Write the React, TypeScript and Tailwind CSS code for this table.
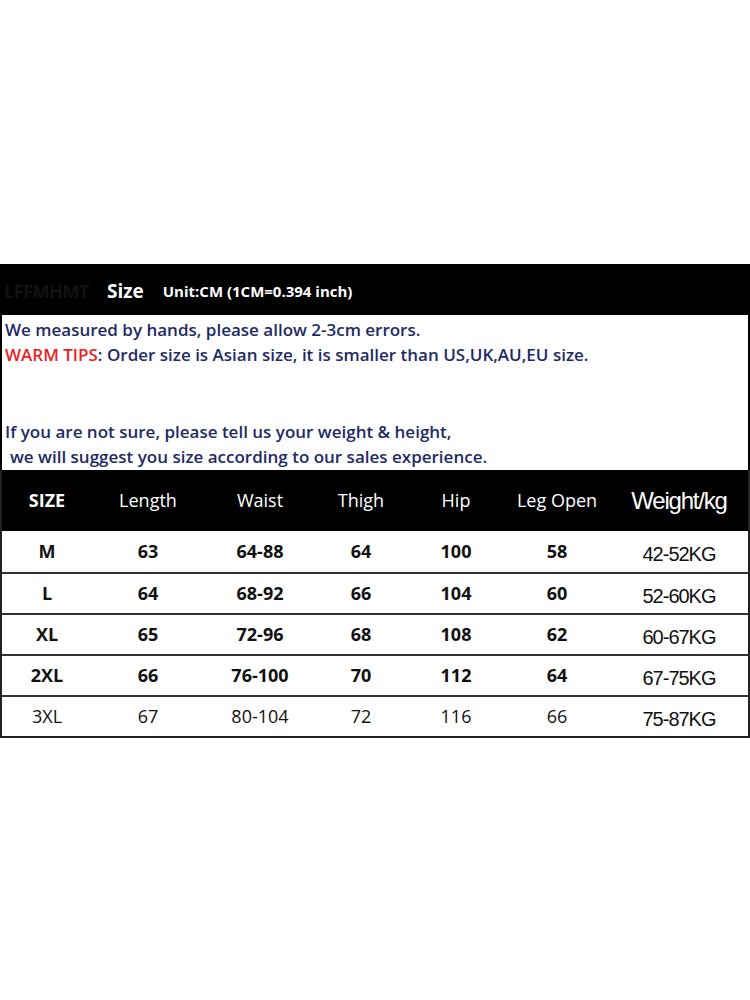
const rows = [
  { size: "M", length: "63", waist: "64-88", thigh: "64", hip: "100", leg: "58", weight: "42-52KG", bold: true },
  { size: "L", length: "64", waist: "68-92", thigh: "66", hip: "104", leg: "60", weight: "52-60KG", bold: true },
  { size: "XL", length: "65", waist: "72-96", thigh: "68", hip: "108", leg: "62", weight: "60-67KG", bold: true },
  { size: "2XL", length: "66", waist: "76-100", thigh: "70", hip: "112", leg: "64", weight: "67-75KG", bold: true },
  { size: "3XL", length: "67", waist: "80-104", thigh: "72", hip: "116", leg: "66", weight: "75-87KG", bold: false },
];

const cols = "grid grid-cols-[90px_112px_112px_90px_100px_102px_142px]";

export default function App() {
  return (
    <div className="min-h-[1000px] w-[750px] bg-white pt-[264px] font-['Open_Sans',sans-serif]">
      {/* title band */}
      <div className="flex h-[51px] items-center bg-black pl-[4px] pt-[4px]">
        <span className="w-[100px] text-[18px] font-bold tracking-tight text-[#121212]">LFFMHMT</span>
        <span className="ml-[3px] text-[19px] font-bold text-white">Size</span>
        <span className="ml-[19px] text-[15px] font-bold text-white">Unit:CM (1CM=0.394 inch)</span>
      </div>

      {/* notes */}
      <div className="h-[155px] border-x-2 border-black pl-[3px] pt-[2px] text-[17px] font-semibold leading-[25px] text-[#1e2b63]">
        <p>We measured by hands, please allow 2-3cm errors.</p>
        <p>
          <span className="text-[#ee1c25]">WARM TIPS</span>: Order size is Asian size, it is smaller than US,UK,AU,EU size.
        </p>
        <p className="mt-[52px]">If you are not sure, please tell us your weight &amp; height,</p>
        <p className="pl-[5px]">we will suggest you size according to our sales experience.</p>
      </div>

      {/* table */}
      <div className="border-x-2 border-b-2 border-[#222]">
        <div className={`${cols} h-[61px] items-center bg-black text-center text-[18px] text-white`}>
          <span className="font-bold">SIZE</span>
          <span>Length</span>
          <span>Waist</span>
          <span>Thigh</span>
          <span>Hip</span>
          <span>Leg Open</span>
          <span className="font-['Liberation_Sans',sans-serif] text-[24px] tracking-[-1.2px]">Weight/kg</span>
        </div>
        {rows.map((r, i) => (
          <div
            key={r.size}
            className={`${cols} h-[41px] items-center text-center text-[18px] text-[#111] ${i > 0 ? "border-t-2 border-[#333]" : ""} ${r.bold ? "font-bold" : ""}`}
          >
            <span>{r.size}</span>
            <span>{r.length}</span>
            <span>{r.waist}</span>
            <span>{r.thigh}</span>
            <span>{r.hip}</span>
            <span>{r.leg}</span>
            <span className="pt-[4px] font-['Liberation_Sans',sans-serif] text-[20px] font-normal tracking-[-1px]">{r.weight}</span>
          </div>
        ))}
      </div>
    </div>
  );
}
